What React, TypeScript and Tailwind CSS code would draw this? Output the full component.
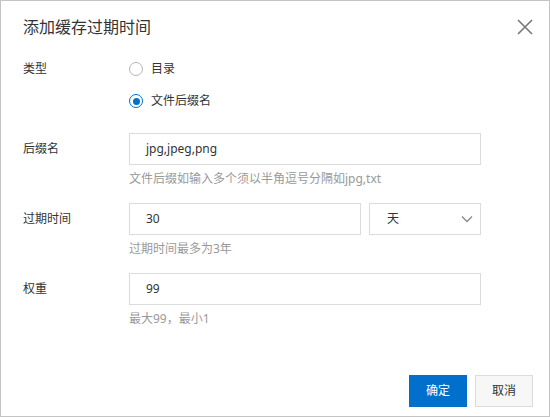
const font = "font-['Noto_Sans','Noto_Sans_CJK_SC',sans-serif]";

function Radio({ label, checked }: { label: string; checked?: boolean }) {
  return (
    <div className="flex h-8 items-center gap-2">
      {checked ? (
        <span className="flex h-[14px] w-[14px] items-center justify-center rounded-full border-[1.5px] border-[#0070cc]">
          <span className="h-[7px] w-[7px] rounded-full bg-[#0070cc]" />
        </span>
      ) : (
        <span className="h-[14px] w-[14px] rounded-full border border-[#b5b5b5]" />
      )}
      <span className="text-xs text-[#333]">{label}</span>
    </div>
  );
}

function Field({ label, hint, children }: { label: string; hint: string; children: React.ReactNode }) {
  return (
    <div className="flex">
      <div className="w-[106px] text-xs leading-8 text-[#333]">{label}</div>
      <div className="flex flex-col">
        {children}
        <div className="mt-[5px] text-xs leading-[18px] text-[#999]">{hint}</div>
      </div>
    </div>
  );
}

function Input({ value, width }: { value: string; width: string }) {
  return (
    <div className={`flex h-8 items-center border border-[#dcdcdc] px-4 text-xs text-[#333] ${width}`}>
      {value}
    </div>
  );
}

export default function App() {
  return (
    <div className={`flex h-[417px] w-[550px] flex-col border border-[#c4c4c4] bg-white ${font}`}>
      <div className="flex h-[52px] items-center justify-between pl-[22px] pr-[16px]">
        <div className="text-base text-[#333]">添加缓存过期时间</div>
        <svg width="16" height="16" viewBox="0 0 16 16" className="text-[#777]">
          <path d="M1 1 15 15M15 1 1 15" stroke="currentColor" strokeWidth="1.6" fill="none" />
        </svg>
      </div>

      <div className="flex flex-col pl-[22px]">
        <div className="flex">
          <div className="w-[106px] text-xs leading-8 text-[#333]">类型</div>
          <div className="flex flex-col">
            <Radio label="目录" />
            <Radio label="文件后缀名" checked />
          </div>
        </div>

        <div className="mt-4 flex flex-col gap-[15px]">
          <Field label="后缀名" hint="文件后缀如输入多个须以半角逗号分隔如jpg,txt">
            <Input value="jpg,jpeg,png" width="w-[352px]" />
          </Field>
          <Field label="过期时间" hint="过期时间最多为3年">
            <div className="flex gap-2">
              <Input value="30" width="w-[232px]" />
              <div className="flex h-8 w-[112px] items-center justify-between border border-[#dcdcdc] pl-[17px] pr-[7px] text-xs text-[#333]">
                <span>天</span>
                <svg width="12" height="8" viewBox="0 0 12 8" className="text-[#888]">
                  <path d="M1 1.5 6 6.5 11 1.5" stroke="currentColor" strokeWidth="1.3" fill="none" />
                </svg>
              </div>
            </div>
          </Field>
          <Field label="权重" hint="最大99，最小1">
            <Input value="99" width="w-[352px]" />
          </Field>
        </div>
      </div>

      <div className="mt-auto flex justify-end gap-2 pb-[9px] pr-4">
        <button className="h-8 w-[58px] bg-[#0070cc] text-xs text-white">确定</button>
        <button className="h-8 w-[58px] border border-[#dcdcdc] bg-[#f7f7f7] text-xs text-[#333]">取消</button>
      </div>
    </div>
  );
}
